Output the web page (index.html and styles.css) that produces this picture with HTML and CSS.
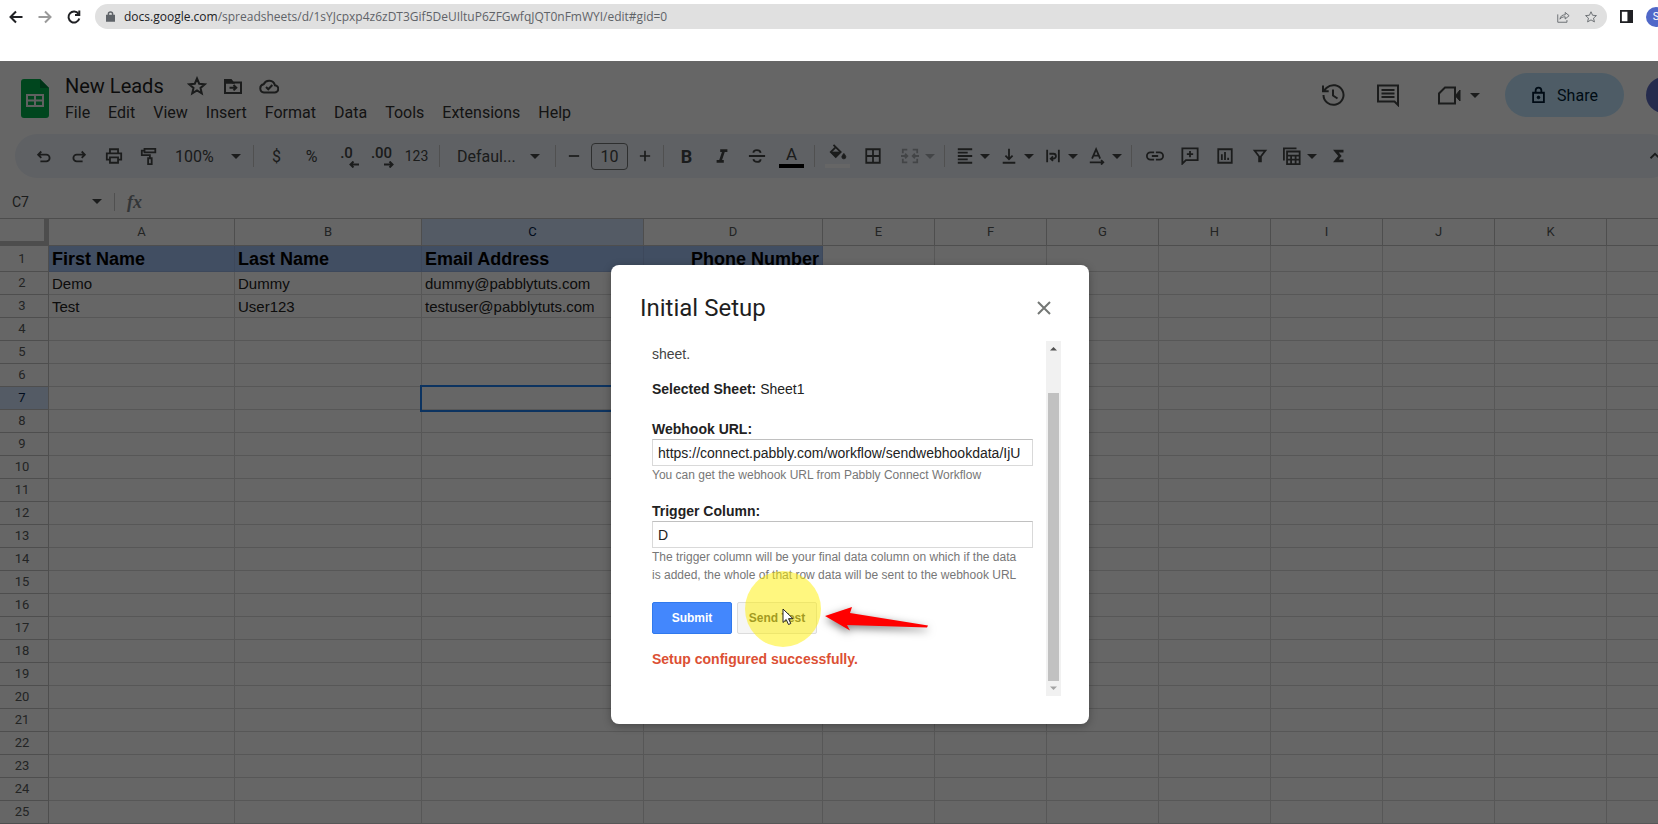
FILE: index.html
```html
<!DOCTYPE html>
<html lang="en">
<head>
  <meta charset="UTF-8" />
  <meta name="viewport" content="width=device-width, initial-scale=1.0"/>
  <title>New Leads - Google Sheets</title>
  <link rel="stylesheet" href="styles.css">
</head>
<body>
  <!-- browser bar -->
  <div class="browser">
    <button class="nav-btn" aria-label="Back">
      <svg class="icon" viewBox="0 0 16 16"><path d="M14.500 8H2.500M8 2.500L2.500 8L8 13.500"/></svg>
    </button>
    <button class="nav-btn muted" aria-label="Forward">
      <svg class="icon" viewBox="0 0 16 16"><path d="M1.500 8H13.500M8 2.500L13.500 8L8 13.500"/></svg>
    </button>
    <button class="nav-btn" aria-label="Reload">
      <svg class="icon" viewBox="0 0 16 16"><path d="M13.300 9.500A5.500 5.500 0 1 1 12.500 4.800"/><path d="M13.300 1.500V6H9"/></svg>
    </button>
    <div class="address">
      <svg class="lock" viewBox="0 0 12 14"><path class="solid" d="M1 5.500h10V13H1z"/><path d="M3.200 6V3.800a2.800 2.800 0 0 1 5.600 0V6"/></svg>
      <div class="url" role="textbox" aria-label="Address" contenteditable="true" spellcheck="false"><span class="host">docs.google.com</span>/spreadsheets/d/1sYJcpxp4z6zDT3Gif5DeUIltuP6ZFGwfqJQT0nFmWYI/edit#gid=0</div>
      <button class="addr-btn" aria-label="Share this page">
        <svg viewBox="0 0 16 16"><path d="M2 5v9h10.500v-2.500M4.500 10.500c.5-3.500 2.500-5 6-5V2.800L15 6.500l-4.500 3.800V7.800c-3 0-4.800.8-6 2.700z"/></svg>
      </button>
      <button class="addr-btn" aria-label="Bookmark">
        <svg viewBox="0 0 16 16"><path d="M8 2l1.800 4 4.400.4-3.300 2.900 1 4.300L8 11.300l-3.900 2.300 1-4.300L1.800 6.400 6.200 6z"/></svg>
      </button>
    </div>
    <button class="side-btn" aria-label="Side panel">
      <svg viewBox="0 0 14 14"><path d="M1 1h12v12H1z"/><path class="solid" d="M9 1h4v12H9z"/></svg>
    </button>
    <button class="profile" aria-label="Profile">S</button>
  </div>

  <div class="app">
    <div class="header">
      <svg class="logo" viewBox="0 0 28 39">
        <path fill="#00b04c" d="M3 0h16l9 9v27a3 3 0 0 1-3 3H3a3 3 0 0 1-3-3V3a3 3 0 0 1 3-3z"/>
        <path fill="#00803a" d="M19 0l9 9h-9z"/>
        <path fill="#f1f1f1" d="M5 15h18v13H5zM7 17v3.500h6V17zM15 17v3.500h6V17zM7 22.500V26h6v-3.500zM15 22.500V26h6v-3.500z" fill-rule="evenodd"/>
      </svg>
      <div class="doc">
        <div class="doc-top">
          <h1>New Leads</h1>
          <button class="doc-btn" aria-label="Star"><svg viewBox="0 0 20 20"><path d="M10 2.500l2.200 5.200 5.600.5-4.300 3.700 1.300 5.500L10 14.500l-4.800 2.900 1.300-5.500-4.300-3.700 5.600-.5z"/></svg></button>
          <button class="doc-btn" aria-label="Move"><svg viewBox="0 0 20 20"><path d="M2 4.500h5.500l2 2H18V17H2zM6.500 11.700h6.500M10.500 9l2.800 2.700-2.800 2.700"/><path class="solid" d="M2 4h6l2 2.700H2z"/></svg></button>
          <button class="doc-btn" aria-label="Document status"><svg viewBox="0 0 20 20"><path d="M5 16.500h10.500a3.600 3.600 0 0 0 .4-7.200A6 6 0 0 0 4.700 8.200 4.200 4.200 0 0 0 5 16.500zM7 11l2.300 2.300 4-4.300"/></svg></button>
        </div>
        <div class="menus">
          <button>File</button><button>Edit</button><button>View</button><button>Insert</button><button>Format</button><button>Data</button><button>Tools</button><button>Extensions</button><button>Help</button>
        </div>
      </div>
      <div class="actions">
        <button class="action" aria-label="Version history"><svg viewBox="0 0 24 24"><path d="M2.500 12a10 9.800 0 1 0 3.200-7.200L3 7.500M2 2.500v5.700h5.700M12 6.500v6l4.500 3"/></svg></button>
        <button class="action comments" aria-label="Comments"><svg viewBox="0 0 24 24"><path d="M2 2.500h20V22l-3.500-3.500H2zM5.500 7h13M5.500 10.500h13M5.500 14h13"/></svg></button>
        <button class="action meet" aria-label="Meet"><svg viewBox="0 0 24 24"><path d="M8 4.500h10v16H2V10.500z"/><path class="solid thin" d="M18.500 12.500L23 7v11l-4.500-5z"/></svg><svg class="caret" viewBox="0 0 8 4"><path d="M0 0h8L4 4z"/></svg></button>
        <button class="share"><svg viewBox="0 0 16 20"><path d="M2 7.500h12V18H2zM4.800 7.500V5a3.200 3.200 0 0 1 6.400 0v2.500"/><circle class="solid thin" cx="8" cy="12.700" r="1.500"/></svg>Share</button>
        <button class="avatar" aria-label="Account"></button>
      </div>
    </div>

    <div class="toolbar">
      <button class="tool" aria-label="Undo"><svg viewBox="0 0 20 20"><path d="M7 5L3.500 8.500 7 12M4 8.500h8.500a3.700 3.700 0 0 1 0 7.500H6"/></svg></button>
      <button class="tool" aria-label="Redo"><svg viewBox="0 0 20 20"><path d="M13 5l3.500 3.500L13 12M16 8.500H7.500a3.700 3.700 0 0 0 0 7.500H14"/></svg></button>
      <button class="tool" aria-label="Print"><svg viewBox="0 0 20 20"><path d="M5.500 6.500V2.500h9v4M5 14H2V7h16v7h-3M5.500 11.500h9v6h-9z"/></svg></button>
      <button class="tool" aria-label="Paint format"><svg viewBox="0 0 20 20"><path d="M5 2h12v4H5zM5 4H2v5h9v3.500M9 12.500h4V19H9z"/></svg></button>
      <label class="zoom"><select aria-label="Zoom"><option>100%</option></select><svg class="caret" viewBox="0 0 8 4"><path d="M0 0h8L4 4z"/></svg></label>
      <span class="sep"></span>
      <button class="tool">$</button>
      <button class="tool">%</button>
      <button class="tool decimal" aria-label="Decrease decimal places"><b>.0</b><svg viewBox="0 0 10 7"><path d="M10 3.500H1.500M4.500 .5l-3 3 3 3"/></svg></button>
      <button class="tool decimal" aria-label="Increase decimal places"><b>.00</b><svg viewBox="0 0 10 7"><path d="M0 3.500h8.500M5.500 .5l3 3-3 3"/></svg></button>
      <button class="tool small">123</button>
      <span class="sep"></span>
      <label class="font"><select aria-label="Font"><option>Defaul...</option></select><svg class="caret" viewBox="0 0 8 4"><path d="M0 0h8L4 4z"/></svg></label>
      <span class="sep"></span>
      <button class="step" aria-label="Decrease font size"><svg viewBox="0 0 14 14"><path d="M1 7h12"/></svg></button>
      <input class="size" type="text" value="10" aria-label="Font size">
      <button class="step" aria-label="Increase font size"><svg viewBox="0 0 14 14"><path d="M1 7h12M7 1v12"/></svg></button>
      <span class="sep"></span>
      <button class="tool bold">B</button>
      <button class="tool" aria-label="Italic"><svg class="heavy" viewBox="0 0 20 20"><path d="M8 4h8M4 16h8M12 4L8 16"/></svg></button>
      <button class="tool" aria-label="Strikethrough"><svg viewBox="0 0 20 20"><path d="M1 10h18M14 6.500C13.500 2.500 6 2.500 6 6.500M6 13.500c.5 4 8 4 8 0"/></svg></button>
      <button class="tool color">A<span class="swatch"></span></button>
      <span class="sep"></span>
      <button class="tool fill" aria-label="Fill color"><svg viewBox="0 0 20 20"><path d="M5 1l8 8-5.500 5.500L2 9l5.500-5.500"/><path class="solid thin" d="M2 9h11l-5.500 5.500zM16.500 10.500s2.200 2.500 2.200 3.800a2.200 2.200 0 0 1-4.400 0c0-1.300 2.200-3.800 2.200-3.800z"/></svg><span class="swatch"></span></button>
      <button class="tool" aria-label="Borders"><svg viewBox="0 0 20 20"><path d="M2.500 2.500h15v15h-15zM10 2.500v15M2.500 10h15"/></svg></button>
      <button class="tool drop merge" aria-label="Merge cells"><svg viewBox="0 0 20 20"><path d="M7 3H2v4M13 3h5v4M7 17H2v-4M13 17h5v-4M0 10h7M4.500 7.500L7 10l-2.500 2.500M20 10h-7M15.500 7.500L13 10l2.500 2.500"/></svg><svg class="caret" viewBox="0 0 8 4"><path d="M0 0h8L4 4z"/></svg></button>
      <span class="sep"></span>
      <button class="tool drop" aria-label="Horizontal align"><svg viewBox="0 0 20 20"><path d="M2 2.500h16M2 6.200h11M2 10h16M2 13.800h11M2 17.500h16"/></svg><svg class="caret" viewBox="0 0 8 4"><path d="M0 0h8L4 4z"/></svg></button>
      <button class="tool drop" aria-label="Vertical align"><svg viewBox="0 0 20 20"><path d="M10 2v11M6 9.500l4 4 4-4M3 17.500h14"/></svg><svg class="caret" viewBox="0 0 8 4"><path d="M0 0h8L4 4z"/></svg></button>
      <button class="tool drop" aria-label="Text wrapping"><svg viewBox="0 0 20 20"><path d="M3.500 3v14M16.500 3v14M6 7.500h4.500a2.500 2.500 0 0 1 0 5.500H8M10 10.500L7.500 13l2.500 2.500"/></svg><svg class="caret" viewBox="0 0 8 4"><path d="M0 0h8L4 4z"/></svg></button>
      <button class="tool drop" aria-label="Text rotation"><svg viewBox="0 0 20 20"><path d="M4.500 13L9 2.500 13.500 13M6 9.500h6M2 17h15M14.500 14.500L17 17l-2.500 2.500"/></svg><svg class="caret" viewBox="0 0 8 4"><path d="M0 0h8L4 4z"/></svg></button>
      <span class="sep"></span>
      <button class="tool" aria-label="Insert link"><svg viewBox="0 0 20 20"><path d="M9 6H5a4 4 0 0 0 0 8h4M11 6h4a4 4 0 0 1 0 8h-4M6.500 10h7"/></svg></button>
      <button class="tool" aria-label="Insert comment"><svg viewBox="0 0 20 20"><path d="M1.500 18.500v-17h17v13h-13zM10 4.500v7M6.500 8h7"/></svg></button>
      <button class="tool" aria-label="Insert chart"><svg viewBox="0 0 20 20"><path d="M2.500 2.500h15v15h-15zM6.500 8v6.500M10 5.500v9M13.500 12v2.500"/></svg></button>
      <button class="tool" aria-label="Create a filter"><svg viewBox="0 0 20 20"><path d="M4 4h12l-5 6.500V16H9v-5.500z"/></svg></button>
      <button class="tool drop" aria-label="Filter views"><svg viewBox="0 0 20 20"><path d="M1 15V1.500h14M4.500 5h14v14h-14zM4.500 9.500h14M4.500 14h14M9 9.500V19M14 9.500V19"/></svg><svg class="caret" viewBox="0 0 8 4"><path d="M0 0h8L4 4z"/></svg></button>
      <button class="tool" aria-label="Functions"><svg class="heavy" viewBox="0 0 20 20"><path d="M15 4.500H6.500L11 10l-4.500 5.500H15"/></svg></button>
      <button class="tool collapse" aria-label="Hide the menus"><svg viewBox="0 0 20 20"><path d="M5 12.500l5-5 5 5"/></svg></button>
    </div>

    <div class="formula">
      <input class="cell-name" type="text" value="C7" aria-label="Name box">
      <svg class="caret" viewBox="0 0 8 4"><path d="M0 0h8L4 4z"/></svg>
      <span class="bar"></span>
      <label class="fx" for="fx">fx</label>
      <input class="fx-input" id="fx" type="text">
    </div>

    <table class="grid">
      <colgroup>
        <col class="col-head"><col class="col-a"><col class="col-b"><col class="col-c"><col class="col-d">
        <col span="8" class="col-rest">
      </colgroup>
      <thead>
        <tr>
          <th class="corner"></th><th>A</th><th>B</th><th class="active">C</th><th>D</th><th>E</th><th>F</th><th>G</th><th>H</th><th>I</th><th>J</th><th>K</th><th></th>
        </tr>
      </thead>
      <tbody id="rows"></tbody>
    </table>

    <div class="scrim">
      <div class="modal" role="dialog" aria-labelledby="modal-title">
        <div class="modal-head">
          <h2 id="modal-title">Initial Setup</h2>
          <button class="close-btn" aria-label="Close"><svg viewBox="0 0 14 14"><path d="M1 1l12 12M13 1L1 13"/></svg></button>
        </div>
        <div class="modal-body">
          <form class="setup">
            <p class="intro">sheet.</p>
            <p class="selected"><b>Selected Sheet:</b> Sheet1</p>
            <div class="field">
              <label for="webhook">Webhook URL:</label>
              <input id="webhook" type="text" value="https://connect.pabbly.com/workflow/sendwebhookdata/IjU">
              <p class="help">You can get the webhook URL from Pabbly Connect Workflow</p>
            </div>
            <div class="field">
              <label for="trigger">Trigger Column:</label>
              <input id="trigger" type="text" value="D">
              <p class="help">The trigger column will be your final data column on which if the data is added, the whole of that row data will be sent to the webhook URL</p>
            </div>
            <div class="buttons">
              <button type="button" class="btn primary">Submit</button>
              <button type="button" class="btn test">Send Test
                <span class="spot"></span>
                <svg class="cursor" viewBox="0 0 12 18"><path d="M1 1v13.500l3.200-3 2.300 5 2.300-1-2.300-4.800H11z"/></svg>
                <svg class="arrow" viewBox="0 0 104 24"><path d="M0 9L27 0 25 6 103 18.500 102 20.500 22 18 25 23.500z"/></svg>
              </button>
            </div>
            <p class="success">Setup configured successfully.</p>
          </form>
          <div class="scrollbar">
            <svg viewBox="0 0 15 15"><path d="M4 9.500h7L7.500 6z"/></svg>
            <span class="thumb"></span>
            <svg class="off" viewBox="0 0 15 15"><path d="M4 5.500h7L7.500 9z"/></svg>
          </div>
        </div>
      </div>
    </div>
  </div>

  <script>
    const data = [
      ['First Name', 'Last Name', 'Email Address', 'Phone Number'],
      ['Demo', 'Dummy', 'dummy@pabblytuts.com'],
      ['Test', 'User123', 'testuser@pabblytuts.com']
    ];
    const rows = document.getElementById('rows');

    for (let r = 1; r <= 25; r++) {
      const tr = document.createElement('tr');
      const th = document.createElement('th');
      th.textContent = r;
      if (r === 7) th.className = 'active';
      tr.appendChild(th);
      for (let c = 0; c < 12; c++) {
        const td = document.createElement('td');
        td.textContent = (data[r - 1] || [])[c] || '';
        if (r === 1 && c < 4) td.className = 'title';
        if (r === 7 && c === 2) td.className = 'current';
        tr.appendChild(td);
      }
      rows.appendChild(tr);
    }
  </script>
</body>
</html>
```
FILE: styles.css
```css
* {
  box-sizing: border-box;
}
body {
  margin: 0;
  height: 100vh;
  display: flex;
  flex-direction: column;
  overflow: hidden;
  font-family: Roboto, sans-serif;
  color: #1f1f1f;
  background: #fff;
}
button, input, select {
  font: inherit;
  color: inherit;
  background: none;
  border: none;
  padding: 0;
  margin: 0;
}
button {
  cursor: pointer;
}
h1, h2, p {
  margin: 0;
}
svg {
  display: block;
  flex: none;
  fill: none;
  stroke: currentColor;
}
svg .solid {
  fill: currentColor;
}
svg .thin {
  stroke-width: 1;
}
.caret {
  width: 10px;
  height: 5px;
  fill: currentColor;
  stroke: none;
}

/* browser bar */
.browser {
  display: flex;
  flex: none;
  align-items: center;
  height: 61px;
  padding: 4px 0 32px 8px;
  gap: 13px;
  color: #202124;
}
.nav-btn svg {
  width: 16px;
  height: 16px;
  stroke-width: 2;
}
.nav-btn.muted {
  color: #9a9a9a;
}
.address {
  flex: 1;
  display: flex;
  align-items: center;
  height: 25px;
  padding: 0 9px 0 11px;
  border-radius: 13px;
  background: #e0e0e0;
  color: #5f6368;
}
.lock {
  width: 9px;
  height: 11px;
  stroke-width: 2;
}
.url {
  flex: 1;
  margin-left: 9px;
  font: 12px/18px "Open Sans", sans-serif;
  white-space: nowrap;
}
.host {
  color: #202124;
}
.addr-btn {
  margin-left: 14px;
}
.addr-btn svg {
  width: 14px;
  height: 14px;
}
.side-btn svg {
  width: 13px;
  height: 13px;
  stroke-width: 2;
}
.profile {
  flex: none;
  width: 20px;
  height: 20px;
  margin-right: -8px;
  border-radius: 50%;
  background: #5068c8;
  color: #fff;
  font-size: 11px;
}

/* document header */
.app {
  position: relative;
  flex: 1;
  min-height: 0;
  overflow: hidden;
}
.header {
  display: flex;
  height: 73px;
  padding: 12px 0 0 21px;
}
.logo {
  width: 28px;
  height: 39px;
  margin-top: 6px;
  stroke: none;
}
.doc {
  margin-left: 16px;
}
.doc-top {
  display: flex;
  align-items: center;
  height: 26px;
}
h1 {
  font-size: 20px;
  font-weight: 400;
  margin-right: 15px;
}
.doc-btn {
  width: 36px;
  color: #444746;
}
.doc-btn svg {
  width: 20px;
  height: 20px;
  margin: 0 auto;
  stroke-width: 2;
}
.menus {
  display: flex;
  gap: 18px;
  height: 26px;
  color: #333;
  font-size: 16px;
}
.actions {
  display: flex;
  align-items: center;
  height: 44px;
  margin-left: auto;
  margin-right: -24px;
  color: #444746;
}
.action svg:first-child {
  width: 24px;
  height: 24px;
  stroke-width: 2;
}
.comments {
  margin-left: 31px;
}
.meet {
  display: flex;
  align-items: center;
  gap: 9px;
  margin-left: 37px;
}
.share {
  display: flex;
  align-items: center;
  justify-content: center;
  gap: 11px;
  width: 119px;
  height: 44px;
  margin: 0 22px 0 25px;
  border-radius: 22px;
  background: #c2e7ff;
  color: #001d35;
  font-size: 16px;
}
.share svg {
  width: 15px;
  height: 18px;
  stroke-width: 2;
}
.avatar {
  width: 36px;
  height: 36px;
  border-radius: 50%;
  background: #5c6bc0;
}

/* toolbar */
.toolbar {
  display: flex;
  align-items: center;
  height: 44px;
  margin: 0 -14px 0 15px;
  padding-left: 11px;
  border-radius: 22px;
  background: #edf2fa;
  color: #444746;
  font-size: 16px;
}
.tool {
  flex: none;
  display: flex;
  align-items: center;
  justify-content: center;
  width: 35px;
  height: 32px;
}
.tool svg:not(.caret) {
  width: 18px;
  height: 18px;
  stroke-width: 2;
}
.tool svg.heavy {
  stroke-width: 3;
}
.tool.drop {
  width: 44px;
  justify-content: flex-start;
  gap: 6px;
  padding-left: 6px;
}
.tool.merge {
  width: 49px;
  padding-left: 11px;
  opacity: .4;
}
.tool.small {
  font-size: 14px;
}
.tool.bold {
  font-size: 18px;
  font-weight: 700;
}
.tool.decimal {
  flex-direction: column;
  align-items: center;
  line-height: 16px;
}
.tool.decimal b {
  font-size: 15px;
  font-weight: 500;
}
.tool.decimal svg:not(.caret) {
  width: 10px;
  height: 7px;
  margin-left: 14px;
}
.tool.color, .tool.fill {
  flex-direction: column;
  font-size: 17px;
  line-height: 20px;
}
.tool.fill {
  gap: 2px;
}
.swatch {
  width: 25px;
  height: 4px;
  background: #000;
}
.fill .swatch {
  background: #fff;
}
.collapse {
  margin-left: auto;
}
.sep {
  flex: none;
  width: 1px;
  height: 22px;
  margin: 0 5px;
  background: #c7c7c7;
}
.zoom, .font {
  display: flex;
  align-items: center;
  justify-content: space-between;
  width: 82px;
  padding: 0 7px 0 9px;
}
.font {
  width: 105px;
  padding: 0 10px 0 12px;
}
.zoom select, .font select {
  appearance: none;
}
.step {
  width: 26px;
}
.step svg {
  width: 12px;
  height: 12px;
  margin: 0 auto;
  stroke-width: 2;
}
.size {
  width: 37px;
  height: 27px;
  margin: 0 4px;
  border: 1px solid #747775;
  border-radius: 4px;
  text-align: center;
}

/* formula bar */
.formula {
  display: flex;
  align-items: center;
  height: 41px;
  padding: 7px 0 0 12px;
  border-bottom: 1px solid #c0c0c0;
  color: #444746;
  font-size: 14px;
}
.cell-name {
  width: 80px;
}
.bar {
  width: 1px;
  height: 18px;
  margin: 0 12px;
  background: #c7c7c7;
}
.fx {
  color: #80868b;
  font: italic 700 18px/18px "Liberation Serif", serif;
}
.fx-input {
  flex: 1;
  margin-left: 12px;
}

/* grid */
.grid {
  width: 1719px;
  table-layout: fixed;
  border-collapse: separate;
  border-spacing: 0;
  font-family: "Liberation Sans", sans-serif;
}
.col-head { width: 49px; }
.col-a { width: 186px; }
.col-b { width: 187px; }
.col-c { width: 222px; }
.col-d { width: 179px; }
.col-rest { width: 112px; }
.grid th, .grid td {
  height: 23px;
  padding: 0 3px;
  border: solid #dadada;
  border-width: 0 1px 1px 0;
  line-height: 20px;
  white-space: nowrap;
}
.grid th {
  border-color: #c4c4c4;
  color: #575a5a;
  font: 13px/16px Roboto, sans-serif;
}
.grid tbody th {
  padding-right: 7px;
}
.grid thead th {
  height: 27px;
}
.grid thead .corner {
  border: solid #c0c0c0;
  border-width: 0 5px 5px 0;
}
.grid th.active {
  background: #d3e3fd;
  color: #041e49;
}
.grid td {
  padding-top: 1px;
  color: #222;
  font-size: 15px;
}
.grid tbody tr:first-child > * {
  height: 26px;
}
.grid td.title {
  padding-top: 0;
  background: #a4c2f4;
  border-color: #98b4e4;
  color: #000;
  font-size: 18px;
  font-weight: 700;
}
.grid td.title:nth-child(5) {
  text-align: right;
}
.grid td.current {
  outline: 2px solid #2080f0;
  outline-offset: 0;
}

/* dialog, centred on a page that runs past the window edge */
.scrim {
  position: absolute;
  inset: 0 -42px 0 0;
  display: flex;
  justify-content: center;
  align-items: flex-start;
  padding-top: 204px;
  background: rgba(0,0,0,0.6);
}
.modal {
  width: 478px;
  padding: 28px 28px 28px 29px;
  border-radius: 8px;
  background: #fff;
  box-shadow: 0 2px 8px rgba(0,0,0,0.3);
  font-family: "Liberation Sans", sans-serif;
}
.modal-head {
  display: flex;
  align-items: center;
  justify-content: space-between;
  height: 30px;
  margin-bottom: 18px;
  padding-right: 10px;
}
h2 {
  font: 400 24px/30px Roboto, sans-serif;
}
.close-btn {
  color: #747775;
}
.close-btn svg {
  width: 14px;
  height: 14px;
  stroke-width: 2;
}
.modal-body {
  display: flex;
  justify-content: space-between;
}
.setup {
  width: 381px;
  margin: 4px 0 28px 12px;
  color: #222;
  font-size: 14px;
  line-height: 18px;
}
.intro {
  margin-bottom: 17px;
  color: #444;
}
.selected {
  margin-bottom: 22px;
}
.field {
  margin-bottom: 18px;
}
.field label {
  display: block;
  margin-bottom: 1px;
  font-weight: 700;
}
.field input {
  display: block;
  width: 100%;
  height: 27px;
  padding: 0 5px;
  border: 1px solid #d9d9d9;
  border-top-color: #c0c0c0;
}
.help {
  padding-right: 8px;
  color: #777;
  font-size: 12px;
}
.buttons {
  display: flex;
  gap: 5px;
  margin-bottom: 16px;
}
.btn {
  width: 80px;
  height: 32px;
  border: 1px solid #dcdcdc;
  border-radius: 2px;
  background: #f5f5f5;
  color: #444;
  font-size: 12px;
  font-weight: 700;
}
.btn.primary {
  border-color: #3079ed;
  background: #4387fd;
  color: #fff;
}
.btn.test {
  position: relative;
}
.success {
  color: #dc5034;
  font-weight: 700;
}
.scrollbar {
  display: flex;
  flex-direction: column;
  width: 15px;
  background: #f1f1f1;
}
.scrollbar svg {
  width: 15px;
  height: 15px;
  fill: #505050;
  stroke: none;
}
.scrollbar svg.off {
  fill: #a3a3a3;
}
.thumb {
  flex: 1;
  margin: 37px 2px 0;
  background: #c1c1c1;
}

/* pointer highlight and arrow */
.spot {
  position: absolute;
  top: -32px;
  left: 7px;
  width: 76px;
  height: 76px;
  border-radius: 50%;
  background: rgba(255,240,0,0.5);
}
.cursor {
  position: absolute;
  top: 5px;
  left: 44px;
  width: 12px;
  height: 18px;
  fill: #fff;
  stroke: #222;
}
.arrow {
  position: absolute;
  top: 4px;
  left: 87px;
  width: 104px;
  height: 24px;
  overflow: visible;
  fill: #f00;
  stroke: none;
  filter: drop-shadow(0 3px 4px rgba(0,0,0,0.5));
}
```
